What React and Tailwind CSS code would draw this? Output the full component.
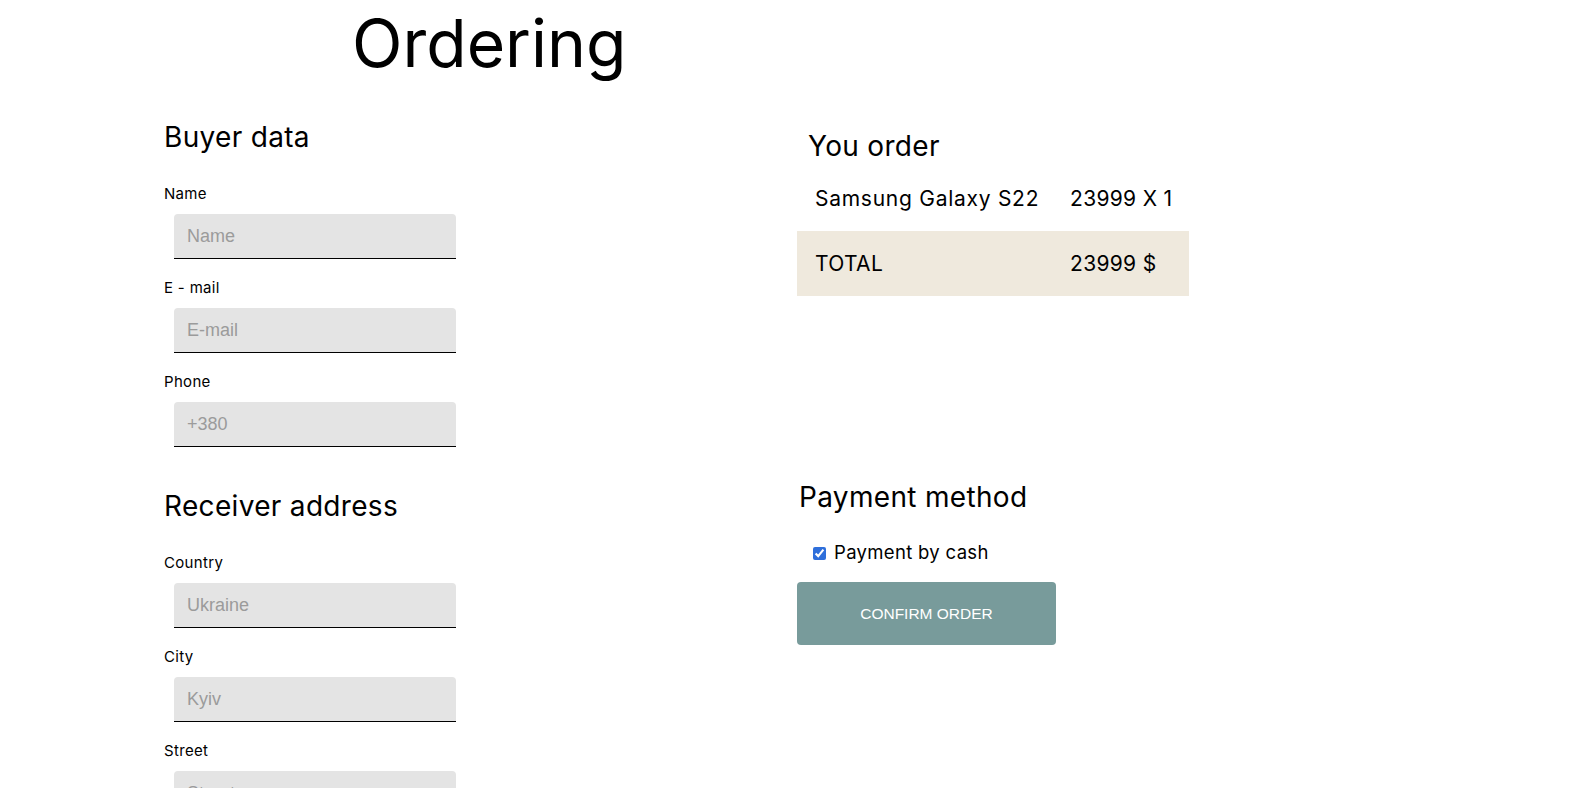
import React from 'react';

const Field = ({ label, placeholder }) => (
  <div className="mb-[19px]">
    <label className="block h-[20px] text-[15px] leading-[20px] mb-[10px]">{label}</label>
    <input
      type="text"
      placeholder={placeholder}
      className="ml-[10px] block h-[45px] w-[282px] rounded-t-[4px] border-b border-black bg-[#e4e4e4] pl-[13px] font-['Liberation_Sans',Arial,sans-serif] text-[18px] tracking-normal text-black outline-none placeholder:text-[#9b9b9b]"
    />
  </div>
);

const SectionTitle = ({ children, className = '' }) => (
  <h2 className={`h-[34px] text-[28px] leading-[34px] font-normal ${className}`}>{children}</h2>
);

const App = () => {
  return (
    <div className="h-[788px] overflow-hidden bg-white pt-[10px] pl-[164px] text-black font-['Inter',sans-serif] tracking-[0.02em]">
      <h1 className="ml-[188px] h-[66px] text-[66px] leading-[66px] font-normal tracking-normal">Ordering</h1>

      <div className="mt-[44px] flex">
        {/* Left column - buyer and address forms */}
        <div className="w-[633px] shrink-0">
          <SectionTitle className="mb-[30px]">Buyer data</SectionTitle>
          <Field label="Name" placeholder="Name" />
          <Field label="E - mail" placeholder="E-mail" />
          <Field label="Phone" placeholder="+380" />

          <div className="pt-[23px]">
            <SectionTitle className="mb-[30px]">Receiver address</SectionTitle>
          </div>
          <Field label="Country" placeholder="Ukraine" />
          <Field label="City" placeholder="Kyiv" />
          <Field label="Street" placeholder="Street" />
        </div>

        {/* Right column - order summary */}
        <div className="w-[392px]">
          <SectionTitle className="mt-[9px] pl-[11px]">You order</SectionTitle>
          <div className="mt-[3px] text-[21px]">
            <div className="grid h-[65px] grid-cols-[255px_1fr] items-center pl-[18px]">
              <span className="tracking-[0.035em]">Samsung Galaxy S22</span>
              <span>23999 X 1</span>
            </div>
            <div className="grid h-[65px] grid-cols-[255px_1fr] items-center bg-[#efe9dd] pl-[18px]">
              <span>TOTAL</span>
              <span>23999 $</span>
            </div>
          </div>

          <SectionTitle className="mt-[184px] pl-[2px]">Payment method</SectionTitle>
          <label className="mt-[29px] flex h-[20px] items-center gap-[8px] pl-[16px] text-[18.5px]">
            <input type="checkbox" defaultChecked className="h-[13px] w-[13px] accent-[#2f6fdb]" />
            <span>Payment by cash</span>
          </label>
          <button className="mt-[19px] h-[63px] w-[259px] rounded-[4px] bg-[#789b9b] font-['Liberation_Sans',Arial,sans-serif] text-[15.5px] tracking-normal text-white">
            CONFIRM ORDER
          </button>
        </div>
      </div>
    </div>
  );
};

export default App;
